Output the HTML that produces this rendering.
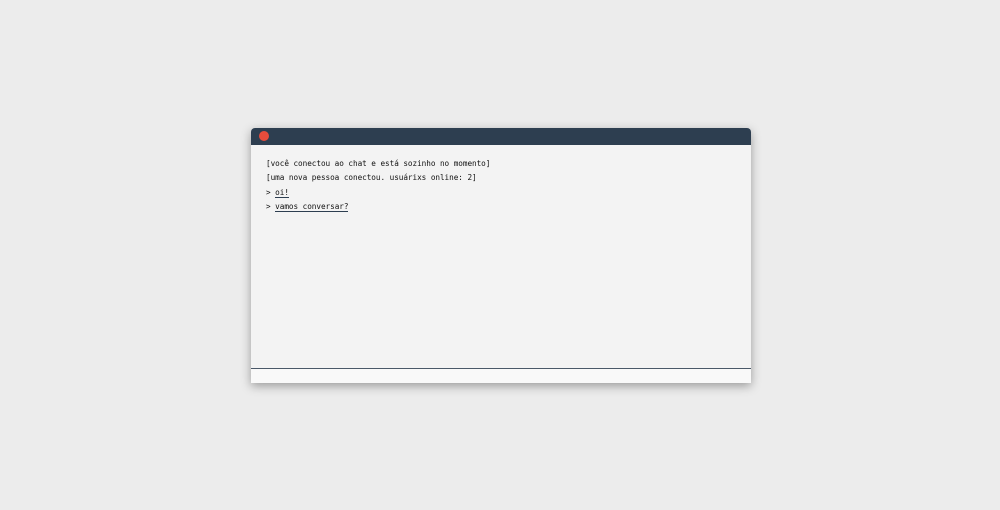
<!DOCTYPE html>
<html><head><style>
body{margin:0;width:1000px;height:510px;background:#ececec;position:relative;overflow:hidden}
.win{position:absolute;left:251px;top:128px;width:500px;height:255px;background:#f3f3f3;box-shadow:0 3px 10px rgba(0,0,0,.35);border-radius:4px 4px 0 0;overflow:hidden}
.hd{height:17px;background:#2d3e50}
.dot{position:absolute;left:259px;top:131px;width:10px;height:10px;border-radius:50%;background:#e74c3c}
.t{position:absolute;left:15px;font:7.7px/10px "DejaVu Sans Mono","Liberation Mono",monospace;letter-spacing:-0.05px;color:#111;white-space:pre}
.u{border-bottom:1px solid #2d3e50}
.in{position:absolute;left:0;top:240px;width:500px;height:15px;background:#f9f9f9;border-top:1px solid #4a5868}
</style></head><body>
<div class="win"><div class="hd"></div>
<div class="t" style="top:31px">[você conectou ao chat e está sozinho no momento]</div>
<div class="t" style="top:45px">[uma nova pessoa conectou. usuárixs online: 2]</div>
<div class="t" style="top:60px">&gt; <span class="u">oi!</span></div>
<div class="t" style="top:74px">&gt; <span class="u">vamos conversar?</span></div>
<div class="in"></div>
</div>
<div class="dot"></div>
</body></html>
